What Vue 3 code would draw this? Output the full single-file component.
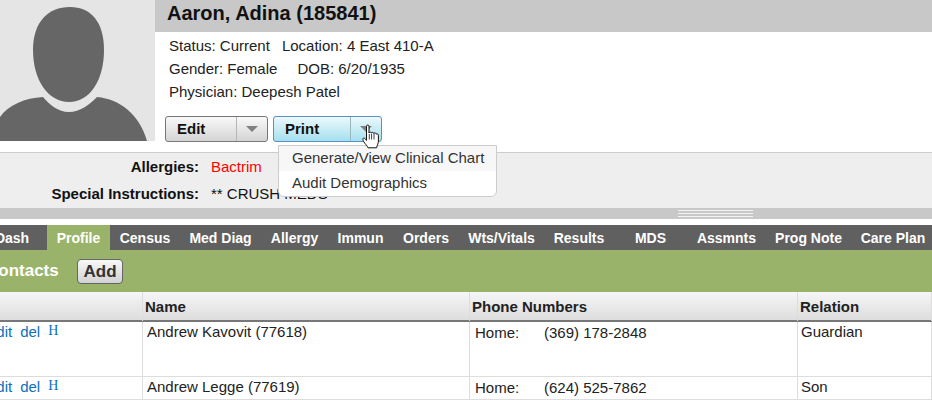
<template>
  <div class="page">
    <div class="top">
      <div class="photo">
        <svg width="155" height="141" viewBox="0 0 155 141">
          <path d="M70 7C91 7 104 22 104 50C104 80 90 102 69 102C48 102 33 80 33 50C33 22 48 7 70 7Z" fill="#666" />
          <path d="M0 117C8 105 25 98 43 97C50 105 58 112 69 112C80 112 89 105 97 97C120 99 140 115 147 141L0 141Z" fill="#666" />
        </svg>
      </div>
      <div class="info">
        <div class="name">Aaron, Adina (185841)</div>
        <div class="details">
          <div>Status: Current<span class="sp1">Location: 4 East 410-A</span></div>
          <div>Gender: Female<span class="sp2">DOB: 6/20/1935</span></div>
          <div>Physician: Deepesh Patel</div>
        </div>
        <div class="buttons">
          <div class="split edit">
            <span class="label">Edit</span>
            <span class="arrow"><i></i></span>
          </div>
          <div class="split print">
            <span class="label">Print</span>
            <span class="arrow"><i></i></span>
          </div>
        </div>
      </div>
    </div>

    <div class="alerts">
      <div class="alert"><b>Allergies:</b><span class="red">Bactrim</span></div>
      <div class="alert"><b>Special Instructions:</b><span>** CRUSH MEDS</span></div>
    </div>
    <div class="splitter"><div class="grip"></div></div>

    <div class="tabs">
      <div v-for="t in tabs" :key="t.label" class="tab" :class="{ active: t.active }" :style="{ width: t.w + 'px' }">{{ t.label }}</div>
    </div>
    <div class="toolbar">
      <span class="title">Contacts</span>
      <span class="add">Add</span>
    </div>

    <div class="row head">
      <div class="c0"></div>
      <div class="c1">Name</div>
      <div class="c2">Phone Numbers</div>
      <div class="c3">Relation</div>
    </div>
    <div v-for="r in rows" :key="r.name" class="row body" :class="r.cls">
      <div class="c0 links"><a>edit</a><a>del</a><a class="h">H</a></div>
      <div class="c1">{{ r.name }}</div>
      <div class="c2 phone"><span class="kind">Home:</span>{{ r.phone }}</div>
      <div class="c3">{{ r.rel }}</div>
    </div>

    <div class="menu">
      <div class="item hover">Generate/View Clinical Chart</div>
      <div class="item">Audit Demographics</div>
    </div>

    <svg class="cursor" width="18" height="26" viewBox="0 0 18 26">
      <path d="M4.5 2.2C4.5 0.6 7 0.6 7 2.2V9C7 7.8 9.4 7.8 9.4 9.2C9.4 8 11.8 8 11.8 9.6C11.8 8.6 14.2 8.6 14.2 10.2C14.2 9.6 16.4 9.6 16.4 11.2V17C16.4 19.5 15.2 21 14.6 23.8H6C5.2 21.5 3 20 1.6 17.5C0.4 15.4 0.8 13.6 2.4 14.2C3.2 14.6 4 15.6 4.5 16.4Z" fill="#fff" stroke="#111" stroke-width="1" stroke-linejoin="round" />
      <path d="M7.3 10V15.5M9.6 10V15.5M12 10V15.5" stroke="#111" stroke-width="0.8" fill="none" />
    </svg>
  </div>
</template>

<script setup>
const tabs = [
  { label: 'Dash', w: 70 },
  { label: 'Profile', w: 63, active: true },
  { label: 'Census', w: 70 },
  { label: 'Med Diag', w: 81 },
  { label: 'Allergy', w: 67 },
  { label: 'Immun', w: 65 },
  { label: 'Orders', w: 66 },
  { label: 'Wts/Vitals', w: 85 },
  { label: 'Results', w: 70 },
  { label: 'MDS', w: 73 },
  { label: 'Assmnts', w: 79 },
  { label: 'Prog Note', w: 85 },
  { label: 'Care Plan', w: 84 },
]

const rows = [
  { name: 'Andrew Kavovit (77618)', phone: '(369) 178-2848', rel: 'Guardian', cls: 'tall' },
  { name: 'Andrew Legge (77619)', phone: '(624) 525-7862', rel: 'Son', cls: '' },
]
</script>

<style>
html, body {
  margin: 0;
  background: #fff;
}
</style>

<style scoped>
.page {
  position: relative;
  width: 932px;
  height: 400px;
  overflow: hidden;
  font-family: "Liberation Sans", Arial, sans-serif;
  font-size: 15px;
  color: #222;
  background: #fff;
}

.top {
  display: flex;
  height: 152px;
}

.photo {
  width: 155px;
  height: 141px;
  background: #e5e5e5;
  flex-shrink: 0;
}

.photo svg {
  display: block;
}

.info {
  flex: 1;
}

.name {
  height: 32px;
  line-height: 27px;
  padding-left: 12px;
  background: #c8c8c8;
  font-size: 20px;
  font-weight: bold;
  color: #111;
}

.details {
  padding: 2px 0 0 14px;
  line-height: 23px;
  color: #222;
}

.sp1 {
  margin-left: 12px;
}

.sp2 {
  margin-left: 20px;
}

.buttons {
  display: flex;
  gap: 5px;
  margin: 13px 0 0 10px;
}

.split {
  display: flex;
  height: 26px;
  box-sizing: border-box;
  border: 1px solid #777;
  border-radius: 3px;
  background: linear-gradient(#f9f9f9, #d4d4d4);
  font-size: 15px;
  font-weight: bold;
  color: #111;
  line-height: 24px;
}

.edit {
  width: 103px;
}

.print {
  width: 109px;
  border-color: #5a8fc4;
  background: linear-gradient(#ecf9fc, #a4e0ee);
}

.label {
  flex: 1;
  padding-left: 11px;
}

.arrow {
  width: 30px;
  display: flex;
  align-items: center;
  justify-content: center;
  border-left: 1px solid #b5b5b5;
}

.print .arrow {
  border-left-color: #9ab8bd;
}

.arrow i {
  width: 0;
  height: 0;
  border-left: 6px solid transparent;
  border-right: 6px solid transparent;
  border-top: 6px solid #808080;
}

.alerts {
  height: 56px;
  box-sizing: border-box;
  border-top: 1px solid #ccc;
  background: #eee;
}

.alert {
  display: flex;
  gap: 12px;
  height: 27px;
  line-height: 27px;
  color: #111;
}

.alert b {
  width: 199px;
  text-align: right;
}

.red {
  color: #f00;
}

.splitter {
  height: 11px;
  background: #c8c8c8;
  display: flex;
  align-items: center;
  margin-bottom: 6px;
}

.grip {
  width: 75px;
  height: 5px;
  margin-left: 678px;
  border-top: 1px solid #f2f2f2;
  border-bottom: 1px solid #f2f2f2;
  background: linear-gradient(#c8c8c8 2px, #f2f2f2 2px, #f2f2f2 3px, #c8c8c8 3px);
}

.tabs {
  display: flex;
  height: 25px;
  margin-left: -23px;
  background: #606060;
  font-size: 14px;
}

.tab {
  flex-shrink: 0;
  text-align: center;
  font-weight: bold;
  color: #fff;
  line-height: 27px;
}

.tab.active {
  background: #99b46a;
}

.toolbar {
  display: flex;
  align-items: center;
  height: 42px;
  margin-left: -14px;
  background: #99b46a;
}

.title {
  font-size: 17px;
  font-weight: bold;
  color: #fff;
  width: 91px;
}

.add {
  width: 46px;
  height: 25px;
  box-sizing: border-box;
  border: 1px solid #666;
  border-radius: 4px;
  background: linear-gradient(#f8f8f8, #d2d2d2);
  text-align: center;
  line-height: 23px;
  font-size: 17px;
  font-weight: bold;
  color: #333;
}

.row {
  display: grid;
  grid-template-columns: 143px 327px 328px 1fr;
}

.row > div {
  padding-left: 2px;
  border-right: 1px solid #ddd;
}

.head {
  height: 30px;
  box-sizing: border-box;
  border-bottom: 2px solid #777;
  background: linear-gradient(#f6f6f6, #ddd);
  font-weight: bold;
  line-height: 29px;
  color: #222;
}

.body {
  box-sizing: border-box;
  height: 23px;
  border-bottom: 1px solid #ddd;
  line-height: 20px;
  color: #222;
}

.tall {
  height: 55px;
}

.body .c1 {
  padding-left: 4px;
}

.body .c3 {
  padding-left: 3px;
}

.body .phone {
  padding-top: 1px;
  padding-left: 5px;
}

.kind {
  display: inline-block;
  width: 69px;
}

.body .links {
  display: flex;
  gap: 8px;
  margin-left: -12px;
  padding-left: 0;
}

.links a {
  color: #0b6fbd;
}

.links .h {
  font-family: "Liberation Serif", serif;
  font-size: 14px;
  line-height: 17px;
}

.menu {
  position: absolute;
  left: 278px;
  top: 145px;
  width: 219px;
  height: 52px;
  box-sizing: border-box;
  border: 1px solid #ccc;
  border-radius: 0 0 6px 6px;
  background: #fff;
  color: #333;
  z-index: 2;
}

.item {
  height: 25px;
  line-height: 24px;
  padding-left: 13px;
}

.item.hover {
  background: #f7f7f7;
}

.cursor {
  position: absolute;
  left: 362px;
  top: 124px;
  z-index: 3;
}
</style>
